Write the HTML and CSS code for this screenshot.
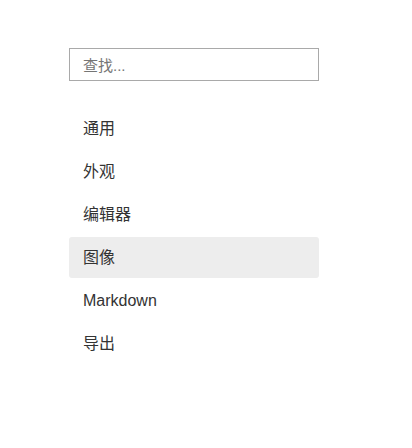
FILE: index.html
```html
<!DOCTYPE html>
<html lang="zh">
<head>
<meta charset="utf-8">
<link rel="stylesheet" href="styles.css">
</head>
<body>
<div class="sidebar">
  <input class="search" type="text" placeholder="查找...">
  <ul class="menu">
    <li class="item">通用</li>
    <li class="item">外观</li>
    <li class="item">编辑器</li>
    <li class="item active">图像</li>
    <li class="item">Markdown</li>
    <li class="item">导出</li>
  </ul>
</div>
</body>
</html>
```
FILE: styles.css
```css
html, body {
  margin: 0;
  padding: 0;
  background: #ffffff;
}
body {
  font-family: "Liberation Sans", "Noto Sans CJK SC", sans-serif;
  color: #333333;
}
.sidebar {
  width: 250px;
  padding: 48px 0 0 69px;
}
.search {
  box-sizing: border-box;
  display: block;
  width: 250px;
  height: 33px;
  margin: 0;
  padding: 1px 13px 0;
  border: 1px solid #a9a9a9;
  border-radius: 0;
  font-family: "Liberation Sans", "Noto Sans CJK SC", sans-serif;
  font-size: 15px;
  color: #333333;
  outline: none;
}
.search::placeholder {
  color: #757575;
}
.menu {
  list-style: none;
  margin: 27px 0 0 0;
  padding: 0;
  display: flex;
  flex-direction: column;
  gap: 2px;
}
.item {
  box-sizing: border-box;
  height: 41px;
  padding: 11px 14px 0;
  line-height: 20px;
  border-radius: 3px;
  font-size: 16px;
  color: #333333;
}
.item.active {
  background: #ededed;
}
```
